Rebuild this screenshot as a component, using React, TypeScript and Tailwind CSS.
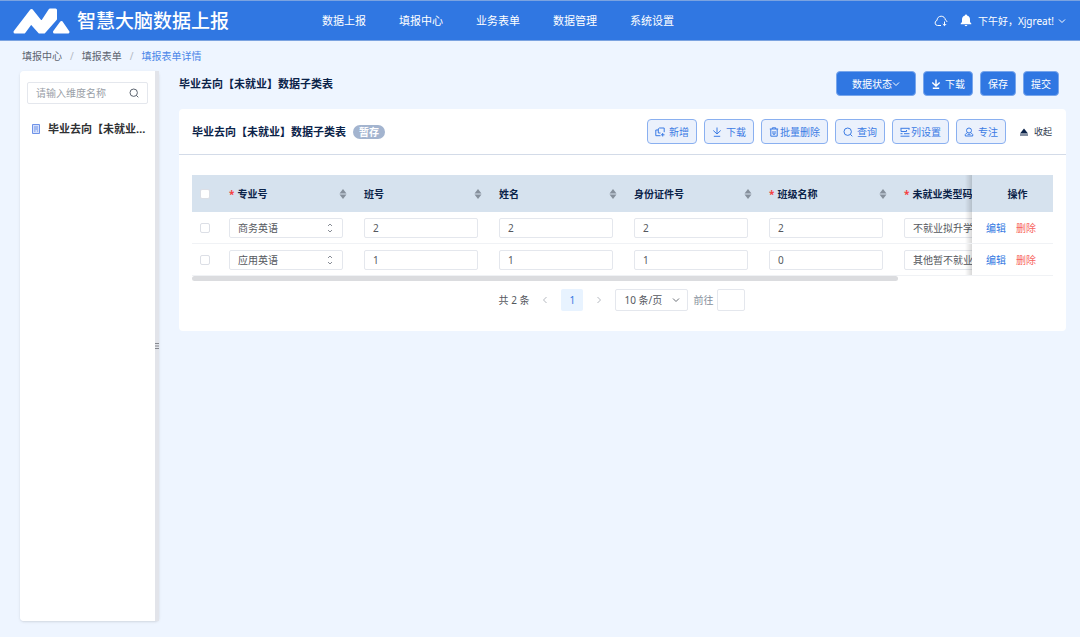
import React, { useState } from "react";

const FONT = "font-['Noto_Sans','Noto_Sans_CJK_SC',sans-serif]";

type IconProps = { className?: string };

function Logo() {
  return (
    <svg viewBox="0 0 57 26" className="h-[26px] w-[57px] shrink-0" fill="#fff" stroke="#fff" strokeWidth="3" strokeLinejoin="round" aria-hidden="true">
      <path d="M2 24 L18.500 2.500 L28.500 15 L37 2 H42.500 V11 L31 24 H26.500 L18 14.500 L11 24 Z" />
      <path d="M48.500 14.500 L55 24 H41.500 Z" />
    </svg>
  );
}

function CloudIcon() {
  return (
    <svg viewBox="0 0 14 12" className="h-[12px] w-[14px]" fill="none" stroke="currentColor" strokeWidth="1" aria-hidden="true">
      <path d="M7 10.500H3.600A2.600 2.600 0 0 1 3 5.400C3 3 4.800 1.200 7.200 1.200c2.200 0 4 1.600 4.200 3.800 1 .3 1.500 1 1.500 2" />
      <path d="M10.500 6.500v4M8.800 9l1.700 1.700L12.200 9" />
    </svg>
  );
}

function BellIcon() {
  return (
    <svg viewBox="0 0 12 13" className="h-[13px] w-[12px]" fill="currentColor" aria-hidden="true">
      <path d="M6 .5c.6 0 1 .4 1 1C9 2 10 3.500 10 5.500V8l1.300 1.600v.6H.7v-.6L2 8V5.500C2 3.500 3 2 5 1.500c0-.6.4-1 1-1ZM4.700 11h2.600c0 .7-.6 1.200-1.300 1.200S4.700 11.700 4.700 11Z" />
    </svg>
  );
}

function Chevron({ className = "" }: IconProps) {
  return (
    <svg viewBox="0 0 8 8" className={`h-[8px] w-[8px] shrink-0 ${className}`} fill="none" stroke="currentColor" aria-hidden="true">
      <path d="M1 2.500 4 5.500 7 2.500" />
    </svg>
  );
}

function DownloadIcon({ bold = false }: { bold?: boolean }) {
  return (
    <svg viewBox="0 0 10 10" className="h-[10px] w-[10px] shrink-0" fill="none" stroke="currentColor" strokeWidth={bold ? 1.4 : 1} aria-hidden="true">
      <path d="M5 .5v6.500M1.300 3.500 5 7l3.700-3.500M1.800 9.300h6.400" />
    </svg>
  );
}

function AddIcon() {
  return (
    <svg viewBox="0 0 10 10" className="h-[10px] w-[10px] shrink-0" fill="none" stroke="currentColor" aria-hidden="true">
      <path d="M3 3H.8v5.700H5.500M3.300 6V1.800L4.500 1H9.200V5.200M3.300 6H5.500M7.700 6v3.500M6 7.800h3.500" />
    </svg>
  );
}

function TrashIcon() {
  return (
    <svg viewBox="0 0 10 10" className="h-[10px] w-[10px] shrink-0" fill="none" stroke="currentColor" aria-hidden="true">
      <path d="M.8 2h8.400M3.300 2V.8h3.400V2M1.800 2v7.200h6.400V2M4 4v3.200M6 4v3.200M4 7.200h2" />
    </svg>
  );
}

function SearchIcon({ className = "" }: IconProps) {
  return (
    <svg viewBox="0 0 10 10" className={`h-[10px] w-[10px] shrink-0 ${className}`} fill="none" stroke="currentColor" aria-hidden="true">
      <circle cx="4.700" cy="4.700" r="3.700" />
      <path d="M7.300 7.300 9.300 9.300" />
    </svg>
  );
}

function ColumnsIcon() {
  return (
    <svg viewBox="0 0 10 10" className="h-[10px] w-[10px] shrink-0" fill="none" stroke="currentColor" aria-hidden="true">
      <path d="M.5 1.300h9M1 1.500v3h5.500M9 1.300v1.500M4 6.700h5.500M.5 6.700h2M.5 9.200h9M6.500 3v1.500" />
    </svg>
  );
}

function FocusIcon() {
  return (
    <svg viewBox="0 0 10 10" className="h-[10px] w-[10px] shrink-0" fill="none" stroke="currentColor" aria-hidden="true">
      <circle cx="5" cy="3.500" r="2.500" />
      <path d="M3.300 5.500 1.300 7.500V9h7.400V7.500L6.700 5.500M3.500 7.300h3" />
    </svg>
  );
}

function FormIcon() {
  return (
    <svg viewBox="0 0 8 10" className="h-[10px] w-[8px] shrink-0" fill="none" stroke="#6f93e8" aria-hidden="true">
      <path d="M.5.5h7v9h-7z" fill="#d5e0fb" />
      <path d="M2 3h4M2 5h4M2 7h1.500M5 7h1" />
    </svg>
  );
}

function SortIcon() {
  return (
    <svg viewBox="0 0 8 10" className="h-[10px] w-[8px] shrink-0" fill="#86909c" aria-hidden="true">
      <path d="M4 0 7.500 4.500H.5ZM4 10 .5 5.500h7Z" />
    </svg>
  );
}

function UpDownIcon() {
  return (
    <svg viewBox="0 0 6 10" className="pointer-events-none absolute top-[5px] right-[10px] h-[10px] w-[6px]" fill="none" stroke="#888d96" aria-hidden="true">
      <path d="M1 3 3 1 5 3M1 7 3 9 5 7" />
    </svg>
  );
}

const navItems = ["数据上报", "填报中心", "业务表单", "数据管理", "系统设置"];

const toolButtons = [
  { label: "新增", icon: <AddIcon />, gap: "gap-1" },
  { label: "下载", icon: <DownloadIcon />, gap: "gap-1" },
  { label: "批量删除", icon: <TrashIcon />, gap: "gap-px" },
  { label: "查询", icon: <SearchIcon />, gap: "gap-1" },
  { label: "列设置", icon: <ColumnsIcon />, gap: "gap-px" },
  { label: "专注", icon: <FocusIcon />, gap: "gap-1" },
];

const columns = [
  { label: "专业号", required: true },
  { label: "班号", required: false },
  { label: "姓名", required: false },
  { label: "身份证件号", required: false },
  { label: "班级名称", required: true },
  { label: "未就业类型码", required: true },
];

const rows = [
  ["商务英语", "2", "2", "2", "2", "不就业拟升学"],
  ["应用英语", "1", "1", "1", "0", "其他暂不就业"],
];

const primaryButton =
  "flex h-[25px] items-center justify-center rounded border border-[#78a6ec] bg-[#3077e2] px-[7px] text-[10px] text-white";
const fieldBox =
  "block h-[20px] w-full rounded-xs border border-[#e4e7ed] bg-white px-2 text-[10px] text-[#55585e] outline-none";
const checkBox =
  "block h-[10px] w-[10px] appearance-none rounded-xs border border-[#dcdfe6] bg-white checked:bg-[#3077e2]";
const stickyCell =
  "sticky right-0 before:absolute before:inset-y-0 before:-left-[7px] before:w-[7px] before:bg-linear-to-l before:from-black/15 before:to-transparent";

function DataTable() {
  return (
    <div className="overflow-hidden">
      <table className="w-full min-w-[1053px] table-fixed border-separate border-spacing-0 text-[10px]">
        <colgroup>
          <col className="w-[27px]" />
          <col />
          <col />
          <col />
          <col />
          <col />
          <col />
          <col />
          <col className="w-[81px]" />
        </colgroup>
        <thead>
          <tr className="h-[37px] text-[#0b2349]">
            <th className="bg-[#d6e2ee] pl-2">
              <input type="checkbox" aria-label="全选" className={checkBox} />
            </th>
            {columns.map((c) => (
              <th key={c.label} className="bg-[#d6e2ee] pr-[7px] pl-[10px] text-left font-bold">
                <div className="flex items-center justify-between whitespace-nowrap">
                  <span>
                    {c.required && <span className="mr-[3px] text-[#f53f3f]">*</span>}
                    {c.label}
                  </span>
                  <SortIcon />
                </div>
              </th>
            ))}
            <th className="bg-[#d6e2ee]" />
            <th className={`bg-[#d6e2ee] pr-[10px] pl-[20px] text-center font-bold ${stickyCell}`}>操作</th>
          </tr>
        </thead>
        <tbody>
          {rows.map((row, r) => (
            <tr key={r} className="h-[32px]">
              <td className="border-b border-[#f0f2f5] pl-2">
                <input type="checkbox" aria-label={`选择第${r + 1}行`} className={checkBox} />
              </td>
              {row.map((value, c) => (
                <td key={c} className="border-b border-[#f0f2f5] pr-[11px] pl-[10px]">
                  {c === 0 ? (
                    <div className="relative">
                      <select aria-label={columns[c].label} defaultValue={value} className={`${fieldBox} appearance-none`}>
                        <option>商务英语</option>
                        <option>应用英语</option>
                      </select>
                      <UpDownIcon />
                    </div>
                  ) : (
                    <input aria-label={columns[c].label} defaultValue={value} className={fieldBox} />
                  )}
                </td>
              ))}
              <td className="border-b border-[#f0f2f5]" />
              <td className={`border-b border-[#f0f2f5] bg-white ${stickyCell}`}>
                <div className="flex gap-[10px] pl-[14px]">
                  <button type="button" className="text-[#3077e2]">编辑</button>
                  <button type="button" className="text-[#f76560]">删除</button>
                </div>
              </td>
            </tr>
          ))}
        </tbody>
      </table>
      <div className="h-[5px] w-[82%] rounded-full bg-[#dbdcdf]" />
    </div>
  );
}

function Pagination() {
  return (
    <div className="flex items-center justify-center pr-[1px] text-[10px] text-[#55585e]">
      <span>共 2 条</span>
      <button type="button" aria-label="上一页" className="ml-3 text-[#b4b8bf]">
        <Chevron className="rotate-90" />
      </button>
      <button type="button" aria-current="page" className="ml-3 h-[22px] w-[22px] rounded-xs bg-[#e8f3ff] text-[#3077e2]">
        1
      </button>
      <button type="button" aria-label="下一页" className="ml-3 text-[#b4b8bf]">
        <Chevron className="-rotate-90" />
      </button>
      <div className="relative ml-3">
        <select aria-label="每页条数" className="block h-[22px] w-[73px] appearance-none rounded-xs border border-[#e4e7ed] bg-white px-2 text-[10px]">
          <option>10 条/页</option>
        </select>
        <Chevron className="pointer-events-none absolute top-[7px] right-2 text-[#6b7077]" />
      </div>
      <label htmlFor="jump" className="mr-1 ml-[5px] text-[#86909c]">前往</label>
      <input id="jump" className="h-[22px] w-[28px] rounded-xs border border-[#e4e7ed] bg-white px-1 text-center" />
    </div>
  );
}

export default function App() {
  const [open, setOpen] = useState(true);
  return (
    <div className={`flex min-h-screen flex-col bg-[#eef5ff] text-[10px] leading-[14px] ${FONT}`}>
      <header className="flex h-[41px] items-center border-y border-[#7ba3e0] bg-[#3077e2] pr-[14px] pl-[13px] text-white">
        <Logo />
        <h1 className="ml-[7px] text-[19px] leading-6 font-medium whitespace-nowrap">智慧大脑数据上报</h1>
        <nav className="ml-[93px] flex gap-[33px] text-[11px] whitespace-nowrap">
          {navItems.map((n) => (
            <a key={n} href="#">{n}</a>
          ))}
        </nav>
        <div className="ml-auto flex items-center">
          <button type="button" aria-label="同步"><CloudIcon /></button>
          <button type="button" aria-label="通知" className="ml-3"><BellIcon /></button>
          <button type="button" className="ml-[6px] flex items-center gap-1 whitespace-nowrap">
            下午好，Xjgreat!
            <Chevron />
          </button>
        </div>
      </header>

      <nav aria-label="面包屑" className="flex h-[30px] items-center gap-2 pl-[22px] text-[#5c6470]">
        <a href="#">填报中心</a>
        <span className="text-[#b4bac4]">/</span>
        <a href="#">填报表单</a>
        <span className="text-[#b4bac4]">/</span>
        <a href="#" className="text-[#4a86e8]">填报表单详情</a>
      </nav>

      <div className="flex flex-1 pr-[14px] pb-4 pl-5">
        <aside className="flex w-[139px] shrink-0 rounded shadow-sm">
          <div className="min-w-0 flex-1 rounded-l bg-white p-[7px] pt-[11px]">
            <label className="flex h-[22px] items-center rounded-xs border border-[#e4e7ed] pr-2 pl-2">
              <input placeholder="请输入维度名称" aria-label="维度名称" className="min-w-0 flex-1 outline-none placeholder:text-[#9a9fa8]" />
              <SearchIcon className="text-[#5c6470]" />
            </label>
            <a href="#" className="mt-[17px] flex items-center gap-2 pl-[5px] text-[11px] leading-4 font-bold text-[#303133]">
              <FormIcon />
              <span className="truncate">毕业去向【未就业】数据子类表</span>
            </a>
          </div>
          <div className="flex w-1 flex-col items-center justify-center gap-px bg-[#e2e4ea]">
            <i className="h-px w-full bg-[#85888f]" />
            <i className="h-[2px] w-full bg-[#b5b7bd]" />
            <i className="h-px w-full bg-[#85888f]" />
          </div>
        </aside>

        <main className="ml-5 min-w-0 flex-1">
          <div className="flex h-[25px] items-center gap-[7px] pr-[7px]">
            <h2 className="mr-auto text-[11px] font-bold text-[#0b2349]">毕业去向【未就业】数据子类表</h2>
            <button type="button" className={`${primaryButton} w-[80px]`}>
              数据状态
              <Chevron />
            </button>
            <button type="button" className={`${primaryButton} gap-1`}>
              <DownloadIcon bold />
              下载
            </button>
            <button type="button" className={primaryButton}>保存</button>
            <button type="button" className={primaryButton}>提交</button>
          </div>

          <section className="mt-[13px] rounded bg-white">
            <div className="flex h-[46px] items-center gap-[7px] border-b border-[#d3dbe8] pr-[14px] pl-[13px]">
              <h3 className="text-[11px] font-bold text-[#0b2349]">毕业去向【未就业】数据子类表</h3>
              <span className="mr-auto rounded-full bg-[#a3b4cf] px-[6px] font-bold text-white">暂存</span>
              {toolButtons.map((b) => (
                <button
                  key={b.label}
                  type="button"
                  className={`flex h-[25px] items-center rounded border border-[#8ab0f0] bg-[#ebf1fc] px-[7px] text-[#3b7be4] ${b.gap}`}
                >
                  {b.icon}
                  {b.label}
                </button>
              ))}
              <button type="button" onClick={() => setOpen(!open)} className="ml-[6px] flex items-center gap-[5px] text-[9px] text-[#303a4d]">
                <svg viewBox="0 0 10 8" className="h-[8px] w-[10px]" fill="#0b2349" aria-hidden="true">
                  <path d="M5 .5 9 5.500H1ZM1 6.500h8v1H1Z" />
                </svg>
                {open ? "收起" : "展开"}
              </button>
            </div>
            {open && (
              <div className="px-[13px] pt-5 pb-5">
                <DataTable />
                <div className="mt-2">
                  <Pagination />
                </div>
              </div>
            )}
          </section>
        </main>
      </div>
    </div>
  );
}
